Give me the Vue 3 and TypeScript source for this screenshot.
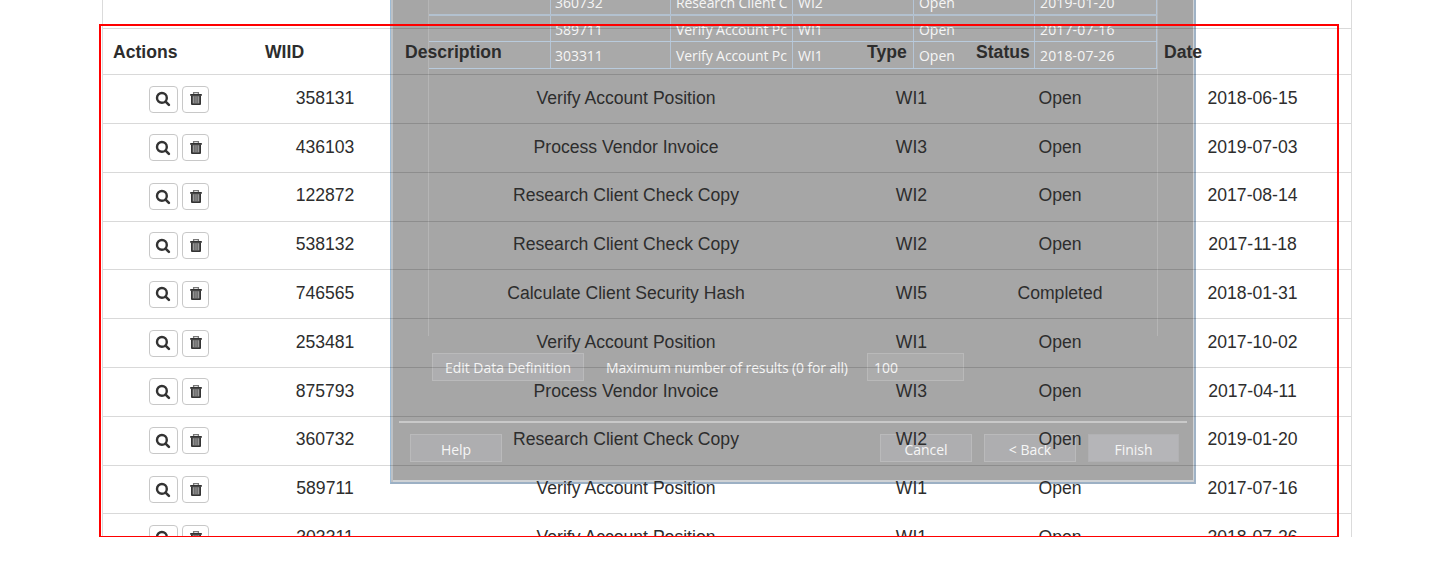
<script setup lang="ts">
interface WorkItem {
  id: string
  description: string
  type: string
  status: string
  date: string
}

const headings: string[] = ['Actions', 'WIID', 'Description', 'Type', 'Status', 'Date']

const items: WorkItem[] = [
  { id: '358131', description: 'Verify Account Position', type: 'WI1', status: 'Open', date: '2018-06-15' },
  { id: '436103', description: 'Process Vendor Invoice', type: 'WI3', status: 'Open', date: '2019-07-03' },
  { id: '122872', description: 'Research Client Check Copy', type: 'WI2', status: 'Open', date: '2017-08-14' },
  { id: '538132', description: 'Research Client Check Copy', type: 'WI2', status: 'Open', date: '2017-11-18' },
  { id: '746565', description: 'Calculate Client Security Hash', type: 'WI5', status: 'Completed', date: '2018-01-31' },
  { id: '253481', description: 'Verify Account Position', type: 'WI1', status: 'Open', date: '2017-10-02' },
  { id: '875793', description: 'Process Vendor Invoice', type: 'WI3', status: 'Open', date: '2017-04-11' },
  { id: '360732', description: 'Research Client Check Copy', type: 'WI2', status: 'Open', date: '2019-01-20' },
  { id: '589711', description: 'Verify Account Position', type: 'WI1', status: 'Open', date: '2017-07-16' },
  { id: '303311', description: 'Verify Account Position', type: 'WI1', status: 'Open', date: '2018-07-26' },
]

const preview: string[][] = [
  ['', '360732', 'Research Client C', 'WI2', 'Open', '2019-01-20'],
  ['', '589711', 'Verify Account Pc', 'WI1', 'Open', '2017-07-16'],
  ['', '303311', 'Verify Account Pc', 'WI1', 'Open', '2018-07-26'],
]
</script>

<template>
  <main class="stage">
    <section class="wizard">
      <div class="preview">
        <div v-for="(row, r) in preview" :key="r" class="preview-row">
          <span v-for="(cell, c) in row" :key="c" class="preview-cell"><span class="preview-text">{{ cell }}</span></span>
        </div>
      </div>
      <div class="options">
        <span class="btn edit">Edit Data Definition</span>
        <span class="max-label">Maximum number of results (0 for all)</span>
        <span class="max-input">100</span>
      </div>
      <div class="rule"></div>
      <div class="footer">
        <span class="btn help">Help</span>
        <span class="btn">Cancel</span>
        <span class="btn">&lt; Back</span>
        <span class="btn primary">Finish</span>
      </div>
    </section>

    <section class="table">
      <div class="spacer"></div>
      <div class="row head">
        <span v-for="h in headings" :key="h">{{ h }}</span>
      </div>
      <div v-for="item in items" :key="item.id" class="row">
        <span class="actions">
          <button class="icon-btn search" type="button">
            <svg width="17" height="16" viewBox="0 0 17 16">
              <circle cx="6.9" cy="6.9" r="4.9" fill="none" stroke="#333" stroke-width="2.4" />
              <path d="M10.6 10.6 L13.9 13.9" stroke="#333" stroke-width="2.6" stroke-linecap="round" />
            </svg>
          </button>
          <button class="icon-btn" type="button">
            <svg width="14" height="16" viewBox="0 0 14 16">
              <path d="M4.6 3.2V1.7H9.4V3.2" fill="none" stroke="#777" stroke-width="1.3" />
              <rect x="1.2" y="3" width="11.6" height="1.8" fill="#333" />
              <path d="M2 4.5H12V13Q12 14 11 14H3Q2 14 2 13Z" fill="#333" />
              <rect x="3.7" y="5.2" width="6.6" height="7.2" fill="#999" />
              <path d="M5.9 5.2V12.4M8.1 5.2V12.4" stroke="#555" stroke-width="1" />
            </svg>
          </button>
        </span>
        <span class="cell">{{ item.id }}</span>
        <span class="cell">{{ item.description }}</span>
        <span class="cell">{{ item.type }}</span>
        <span class="cell">{{ item.status }}</span>
        <span class="cell">{{ item.date }}</span>
      </div>
    </section>

    <div class="highlight"></div>
  </main>
</template>

<style>
body {
  background: #fff;
}
</style>

<style scoped>
* {
  box-sizing: border-box;
}
.stage {
  position: relative;
  width: 1438px;
  height: 537px;
  overflow: hidden;
  background: #fff;
}

/* Wizard window showing through from behind the table */
.wizard {
  position: absolute;
  left: 390px;
  top: 0;
  width: 806px;
  height: 484px;
  background: #a6a6a6;
  border: solid #9dbbd5;
  border-width: 0 2px 2px 1px;
  border-right-color: #9fb2c5;
  border-bottom-color: #9cb0c4;
  box-shadow: inset 2px 0 0 #bdc1c5, inset -1px -2px 0 #cfd2d5;
  font-family: 'Open Sans', 'Noto Sans', sans-serif;
  font-size: 14px;
  letter-spacing: -0.04px;
  color: #f6f6f6;
}
.preview {
  width: 730px;
  height: 336px;
  margin-left: 37px;
  border: solid #b5b5b5;
  border-width: 0 1px;
}
.preview-row {
  display: grid;
  grid-template-columns: 122px 120px 122px 121px 121px 122px;
  height: 26px;
  border-bottom: 1px solid #b9cbdd;
  background: #a9a9a9;
}
.preview-row:first-child {
  height: 16px;
  border-bottom-width: 2px;
  border-bottom-color: #b3c1cf;
}
.preview-row:last-child {
  height: 27px;
}
.preview-cell {
  display: flex;
  align-items: flex-end;
  padding: 0 4px 1px 5px;
  overflow: hidden;
  white-space: nowrap;
  line-height: 20px;
  border-right: 1px solid #b5c5d6;
}
.preview-cell:nth-child(2) {
  padding-left: 4px;
}
.preview-cell:nth-child(3) {
  letter-spacing: -0.1px;
}
.preview-cell:last-child {
  letter-spacing: 0.15px;
}
.preview-row:last-child .preview-cell {
  padding-bottom: 2px;
}
.options {
  display: flex;
  height: 28px;
  margin: 17px 0 0 41px;
  line-height: 28px;
}
.btn {
  display: block;
  width: 92px;
  height: 28px;
  line-height: 29px;
  text-align: center;
  background: #aeaeb0;
  border: 1px solid #bababb;
  white-space: nowrap;
}
.edit {
  width: 152px;
  line-height: 27px;
}
.max-label {
  width: 283px;
  padding-left: 22px;
  letter-spacing: -0.14px;
  line-height: 29px;
  white-space: nowrap;
}
.max-input {
  width: 97px;
  padding-left: 6px;
  line-height: 27px;
  background: #acacac;
  border: 1px solid #b9b9b9;
}
.rule {
  height: 2px;
  margin: 40px 7px 0 8px;
  background: #c9c9c9;
}
.footer {
  display: flex;
  gap: 12px;
  margin: 11px 15px 0 19px;
}
.help {
  margin-right: auto;
}
.primary {
  width: 91px;
  background: #b5b5b8;
  border-color: #b1b1b3;
}

.table {
  position: relative;
  width: 1250px;
  margin-left: 102px;
  border: solid rgba(0, 0, 0, 0.14);
  border-width: 0 1px;
  font-family: 'Liberation Sans', Arial, sans-serif;
  font-size: 17.6px;
  color: #2d2d2d;
}
.spacer {
  height: 28px;
}
.row {
  display: grid;
  grid-template-columns: 152px 140px 462px 109px 188px 197px;
  align-items: center;
  height: 48.8px;
  text-align: center;
  border-top: 1px solid rgba(0, 0, 0, 0.15);
  white-space: nowrap;
}
.head {
  height: 46.2px;
  text-align: left;
  font-weight: bold;
}
.head span {
  padding: 2px 0 0 10px;
}
.cell {
  padding-bottom: 1.4px;
}
.actions {
  display: flex;
  justify-content: center;
  gap: 4px;
  padding-top: 0.2px;
}
.icon-btn {
  display: flex;
  align-items: center;
  justify-content: center;
  width: 27px;
  height: 27px;
  padding: 0;
  background: #fff;
  border: 1px solid #c8c8c8;
  border-radius: 4px;
}
.search {
  width: 29px;
}
.highlight {
  position: absolute;
  left: 99px;
  top: 24px;
  width: 1240px;
  height: 513px;
  border: 2px solid #f00;
  border-bottom-width: 1px;
}
</style>
